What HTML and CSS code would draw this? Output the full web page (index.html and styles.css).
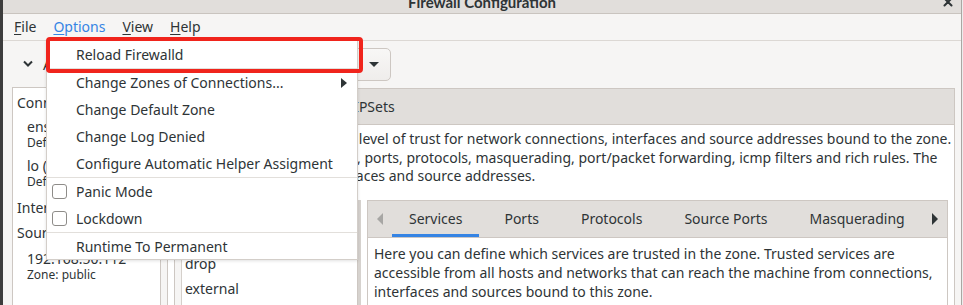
FILE: index.html
```html
<!DOCTYPE html>
<html>
<head>
<meta charset="utf-8">
<title>Firewall Configuration</title>
<link rel="stylesheet" href="styles.css">
</head>
<body>
<div class="window">
  <header class="titlebar">
    <span class="title">Firewall Configuration</span>
    <svg class="close" width="10" height="10" viewBox="0 0 10 10"><path d="M1.5 1.5 L8.5 8.5 M8.5 1.5 L1.5 8.5" stroke="#2e3436" stroke-width="2" stroke-linecap="round" fill="none"/></svg>
  </header>
  <nav class="menubar">
    <span class="menu"><u>F</u>ile</span>
    <span class="menu open"><u>O</u>ptions</span>
    <span class="menu"><u>V</u>iew</span>
    <span class="menu"><u>H</u>elp</span>
  </nav>
  <div class="toolbar">
    <div class="toggle">
      <svg width="12" height="8" viewBox="0 0 12 8"><polyline points="2,1.5 6,5.5 10,1.5" fill="none" stroke="#2e3436" stroke-width="2"/></svg>
      <span class="toggle-label">Active Bindings</span>
    </div>
    <div class="config">
      <span class="config-label">Configuration:</span>
      <div class="combo"><span>Runtime</span><span class="combo-tri"></span></div>
    </div>
  </div>
  <div class="main">
    <aside class="bindings">
      <div class="bhead first">Connections</div>
      <div class="entry"><div class="ename">ens3 (ens3)</div><div class="esub">Default Zone: public</div></div>
      <div class="entry next"><div class="ename">lo (lo)</div><div class="esub">Default Zone: public</div></div>
      <div class="bhead">Interfaces</div>
      <div class="bhead tight">Sources</div>
      <div class="entry src"><div class="ename">192.168.50.112</div><div class="esub">Zone: public</div></div>
    </aside>
    <section class="notebook outer">
      <div class="tabbar outer-bar">
        <div class="otab active">Zones</div>
        <div class="otab">Services</div>
        <div class="otab">IPSets</div>
      </div>
      <div class="page">
        <p class="desc">A firewalld zone defines the level of trust for network connections, interfaces and source addresses bound to the zone.<br>The zone combines services, ports, protocols, masquerading, port/packet forwarding, icmp filters and rich rules. The<br>zone can be bound to interfaces and source addresses.</p>
        <div class="zone-area">
          <div class="zones">
            <div class="zones-list">
              <div class="zone">block</div>
              <div class="zone">dmz</div>
              <div class="zone">drop</div>
              <div class="zone">external</div>
              <div class="zone">home</div>
            </div>
          </div>
          <div class="handle"></div>
          <div class="notebook inner">
            <div class="tabbar inner-bar">
              <div class="arrow-box left"><span class="tri-left"></span></div>
              <div class="itabs">
                <div class="itab active">Services</div>
                <div class="itab">Ports</div>
                <div class="itab">Protocols</div>
                <div class="itab">Source Ports</div>
                <div class="itab">Masquerading</div>
                <div class="itab">Port Forwarding</div>
              </div>
              <div class="arrow-box right"><span class="tri-right"></span></div>
            </div>
            <div class="ipage">
              <p class="itext">Here you can define which services are trusted in the zone. Trusted services are<br>accessible from all hosts and networks that can reach the machine from connections,<br>interfaces and sources bound to this zone.</p>
            </div>
          </div>
        </div>
      </div>
    </section>
  </div>

  <div class="popup">
    <div class="mi"><span class="gut"></span><span>Reload Firewalld</span></div>
    <div class="sep"></div>
    <div class="mi"><span class="gut"></span><span>Change Zones of Connections...</span><span class="sub-arrow"></span></div>
    <div class="mi"><span class="gut"></span><span>Change Default Zone</span></div>
    <div class="mi"><span class="gut"></span><span>Change Log Denied</span></div>
    <div class="mi"><span class="gut"></span><span>Configure Automatic Helper Assigment</span></div>
    <div class="sep"></div>
    <div class="mi"><span class="gut"><span class="check"></span></span><span>Panic Mode</span></div>
    <div class="mi"><span class="gut"><span class="check"></span></span><span>Lockdown</span></div>
    <div class="sep"></div>
    <div class="mi last"><span class="gut"></span><span>Runtime To Permanent</span></div>
  </div>
  <div class="annot"></div>
</div>
</body>
</html>
```
FILE: styles.css
```css
* { box-sizing: border-box; }
html, body { margin: 0; padding: 0; }
body {
  width: 963px;
  height: 305px;
  overflow: hidden;
  background: #ececec;
  font-family: "Noto Sans", sans-serif;
  font-size: 14px;
  color: #2e3436;
}
.window {
  position: relative;
  width: 962px;
  height: 305px;
  background: #f6f5f4;
  border-left: 3px solid #3d3d3d;
  border-right: 1px solid #aaa7a3;
  display: flex;
  flex-direction: column;
  overflow: hidden;
}

/* title bar */
.titlebar {
  flex: none;
  height: 14px;
  background: #e1dedb;
  border-bottom: 1px solid #c9c4bf;
  display: grid;
  grid-template-columns: 1fr auto 1fr;
  align-items: start;
  overflow: hidden;
}
.title {
  grid-column: 2;
  font-family: Lato, "Noto Sans", sans-serif;
  font-weight: 700;
  font-size: 15px;
  line-height: 18px;
  margin-top: -7px;
  white-space: nowrap;
}
.close {
  grid-column: 3;
  justify-self: end;
  margin: -3px 8px 0 0;
}

/* menu bar */
.menubar {
  flex: none;
  height: 27px;
  display: flex;
  align-items: center;
  padding-left: 2.5px;
  border-bottom: 1px solid #dcd8d4;
}
.menu {
  padding: 0 8.5px;
  line-height: 26px;
}
.menu u { text-decoration-thickness: 1px; text-underline-offset: 2px; }
.menu.open { color: #3584e4; }

/* toolbar */
.toolbar {
  flex: none;
  height: 46px;
  width: 388px;
  display: flex;
  align-items: center;
  justify-content: space-between;
  padding-left: 19px;
}
.toggle { display: flex; align-items: center; gap: 9px; }
.config { display: flex; align-items: center; gap: 8px; }
.combo {
  width: 130px;
  height: 33px;
  border: 1px solid #cdc7c2;
  border-radius: 5px;
  background: linear-gradient(#f8f7f6, #efedeb);
  display: flex;
  align-items: center;
  justify-content: space-between;
  padding: 0 11px 0 10px;
}
.combo-tri {
  width: 0; height: 0;
  border-left: 5px solid transparent;
  border-right: 5px solid transparent;
  border-top: 5px solid #2e3436;
}

/* main */
.main {
  flex: none;
  height: 260px;
  display: flex;
  align-items: flex-start;
  padding: 0 6px 0 9px;
}
.bindings {
  flex: none;
  width: 149px;
  height: 260px;
  background: #ffffff;
  border: 1px solid #cdc7c2;
  padding: 3px 0 0 4px;
  white-space: nowrap;
  overflow: hidden;
}
.bhead { line-height: 25px; margin-top: 5px; }
.bhead.first { line-height: 23px; margin-top: 0; }
.bhead.tight { margin-top: 0; }
.entry { margin-top: 4px; padding-left: 10px; }
.entry.next { margin-top: 6px; }
.entry.src { margin-top: 5px; }
.ename { line-height: 17px; }
.esub { font-size: 12px; line-height: 16px; }

.notebook {
  border: 1px solid #cdc7c2;
  background: #ffffff;
  display: flex;
  flex-direction: column;
  min-width: 0;
  overflow: hidden;
}
.notebook.outer {
  flex: 1;
  margin: 1px 0 0 6px;
  height: 259px;
}
.tabbar {
  flex: none;
  display: flex;
  background: #e1dedb;
  border-bottom: 1px solid #cdc7c2;
}
.outer-bar { height: 36px; padding-left: 2px; }
.otab {
  margin: 0 4px;
  padding: 0 15px;
  line-height: 35px;
  white-space: nowrap;
}
.otab:first-child { margin-left: 0; }
.otab.active, .itab.active { box-shadow: inset 0 -3px 0 #3584e4; }

.page {
  flex: 1;
  min-width: 0;
  padding: 5px 6px 0;
  display: flex;
  flex-direction: column;
}
.desc {
  margin: 0;
  line-height: 18.5px;
  white-space: nowrap;
}
.zone-area {
  flex: 1;
  min-width: 0;
  display: flex;
  margin-top: 14.5px;
}
.zones {
  flex: none;
  width: 184px;
  border: 1px solid #cdc7c2;
  border-bottom: none;
  background: #f6f5f4;
  padding-left: 6px;
  display: flex;
}
.zones-list {
  flex: 1;
  background: #ffffff;
  border-left: 1px solid #d5d0cb;
  padding-left: 3px;
}
.zone { line-height: 25px; }
.handle {
  flex: none;
  width: 3px;
  background: #d6d2ce;
}
.notebook.inner {
  flex: 1;
  margin-left: 6px;
  border-bottom: none;
}
.inner-bar { height: 37px; }
.arrow-box {
  flex: none;
  width: 20px;
  display: flex;
  align-items: center;
}
.arrow-box.left { justify-content: flex-end; padding-right: 5px; }
.arrow-box.right { justify-content: flex-start; padding-left: 5px; }
.tri-left {
  width: 0; height: 0;
  border-top: 6px solid transparent;
  border-bottom: 6px solid transparent;
  border-right: 6px solid #a7a6a4;
}
.tri-right {
  width: 0; height: 0;
  border-top: 6px solid transparent;
  border-bottom: 6px solid transparent;
  border-left: 6px solid #2e3436;
}
.itabs {
  flex: 1;
  min-width: 0;
  display: flex;
  overflow: hidden;
}
.itab {
  flex: none;
  margin: 0 4px;
  padding: 0 17px;
  line-height: 36px;
  white-space: nowrap;
}
.ipage { flex: 1; padding: 6px 6px 0; }
.itext { margin: 0; line-height: 19px; white-space: nowrap; }

/* popup menu */
.popup {
  position: absolute;
  left: 43px;
  top: 40px;
  width: 312px;
  background: #ffffff;
  border: 1px solid #d3cec9;
  box-shadow: 0 1px 3px rgba(0, 0, 0, 0.12);
}
.mi {
  height: 27px;
  display: flex;
  align-items: center;
  padding-right: 10px;
  white-space: nowrap;
}
.mi.last { height: 26px; }
.gut {
  flex: none;
  width: 29px;
  display: flex;
  align-items: center;
  padding-left: 5px;
}
.check {
  width: 15px;
  height: 15px;
  border: 1px solid #8e8c89;
  border-radius: 3px;
  background: #ffffff;
}
.sep { height: 1px; background: #e2dfdb; }
.sub-arrow {
  margin-left: auto;
  width: 0; height: 0;
  border-top: 5px solid transparent;
  border-bottom: 5px solid transparent;
  border-left: 6px solid #2e3436;
}
.annot {
  position: absolute;
  left: 43px;
  top: 37px;
  width: 317px;
  height: 36px;
  border: 4px solid #f0241c;
  border-radius: 4px;
}
```
